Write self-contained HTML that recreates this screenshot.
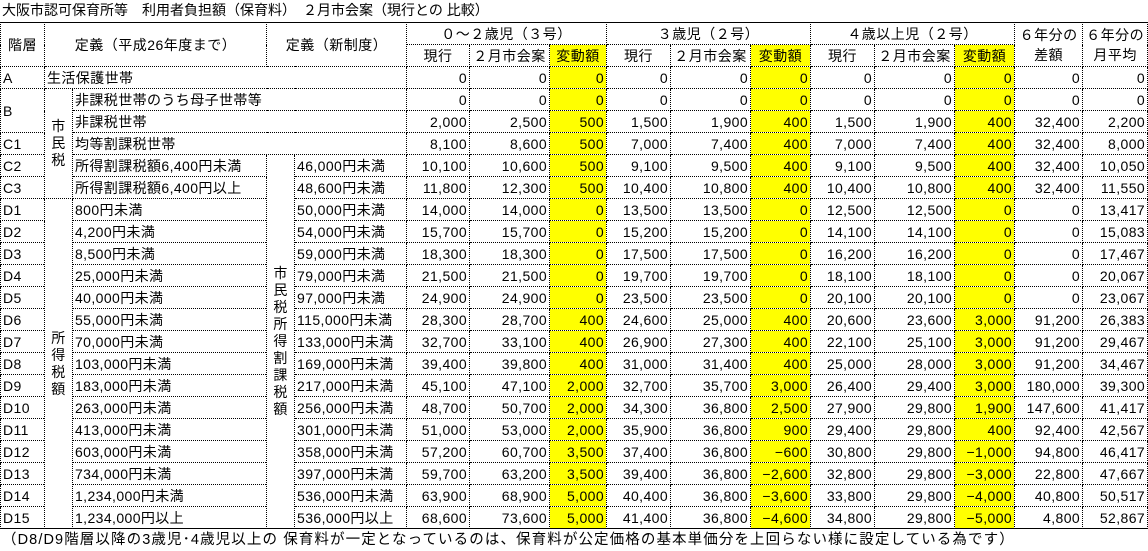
<!DOCTYPE html>
<html><head><meta charset="utf-8"><style>
*{margin:0;padding:0;box-sizing:border-box}
body{width:1148px;height:551px;background:#fff;font-family:"Liberation Sans","Noto Sans CJK JP",sans-serif;font-size:14px;color:#000;overflow:hidden;position:relative}
.title{position:absolute;left:0;top:0;width:1148px;height:23px;border-bottom:1px solid #000;line-height:21px;padding-left:2px;font-size:14px}
table{position:absolute;left:0;top:22px;border-collapse:collapse;table-layout:fixed;width:1147px}
td{border:1px dotted #000;height:22px;padding:0 2px;line-height:20px;white-space:nowrap;overflow:hidden;text-align:right;letter-spacing:0.4px}
tr.h td{text-align:center;font-size:14px;letter-spacing:0.5px}
td.l{text-align:left}
td.v{text-align:center;vertical-align:middle;line-height:17px;white-space:normal}
.y{background:#ffff00}
.foot{position:absolute;left:0;top:528px;width:1147px;height:23px;border-top:1px solid #000;line-height:22px;padding-left:2px;font-size:14.5px;letter-spacing:1.1px;white-space:nowrap}
</style></head><body>
<div class="title">大阪市認可保育所等　利用者負担額（保育料）　２月市会案（現行との 比較）</div>
<table>
<colgroup><col style="width:44px"><col style="width:28px"><col style="width:194px"><col style="width:28px"><col style="width:112px"><col style="width:63px"><col style="width:80px"><col style="width:57px"><col style="width:64px"><col style="width:80px"><col style="width:60px"><col style="width:64px"><col style="width:80px"><col style="width:60px"><col style="width:68px"><col style="width:65px"></colgroup>
<tr class="h"><td rowspan="2">階層</td><td colspan="2" rowspan="2">定義（平成26年度まで）</td><td colspan="2" rowspan="2">定義（新制度）</td><td colspan="3">０～２歳児（３号）</td><td colspan="3">３歳児（２号）</td><td colspan="3">４歳以上児（２号）</td><td rowspan="2" style="line-height:20px;white-space:normal">６年分の<br>差額</td><td rowspan="2" style="line-height:20px;white-space:normal">６年分の<br>月平均</td></tr>
<tr class="h"><td>現行</td><td>２月市会案</td><td class="y">変動額</td><td>現行</td><td>２月市会案</td><td class="y">変動額</td><td>現行</td><td>２月市会案</td><td class="y">変動額</td></tr>
<tr><td class="l">A</td><td class="l" colspan="4">生活保護世帯</td><td>0</td><td>0</td><td class="y">0</td><td>0</td><td>0</td><td class="y">0</td><td>0</td><td>0</td><td class="y">0</td><td>0</td><td>0</td></tr>
<tr><td class="l" rowspan="2">B</td><td class="v" rowspan="5">市<br>民<br>税</td><td class="l" colspan="3">非課税世帯のうち母子世帯等</td><td>0</td><td>0</td><td class="y">0</td><td>0</td><td>0</td><td class="y">0</td><td>0</td><td>0</td><td class="y">0</td><td>0</td><td>0</td></tr>
<tr><td class="l" colspan="3">非課税世帯</td><td>2,000</td><td>2,500</td><td class="y">500</td><td>1,500</td><td>1,900</td><td class="y">400</td><td>1,500</td><td>1,900</td><td class="y">400</td><td>32,400</td><td>2,200</td></tr>
<tr><td class="l">C1</td><td class="l" colspan="3">均等割課税世帯</td><td>8,100</td><td>8,600</td><td class="y">500</td><td>7,000</td><td>7,400</td><td class="y">400</td><td>7,000</td><td>7,400</td><td class="y">400</td><td>32,400</td><td>8,000</td></tr>
<tr><td class="l">C2</td><td class="l">所得割課税額6,400円未満</td><td class="v" rowspan="17">市<br>民<br>税<br>所<br>得<br>割<br>課<br>税<br>額</td><td class="l">46,000円未満</td><td>10,100</td><td>10,600</td><td class="y">500</td><td>9,100</td><td>9,500</td><td class="y">400</td><td>9,100</td><td>9,500</td><td class="y">400</td><td>32,400</td><td>10,050</td></tr>
<tr><td class="l">C3</td><td class="l">所得割課税額6,400円以上</td><td class="l">48,600円未満</td><td>11,800</td><td>12,300</td><td class="y">500</td><td>10,400</td><td>10,800</td><td class="y">400</td><td>10,400</td><td>10,800</td><td class="y">400</td><td>32,400</td><td>11,550</td></tr>
<tr><td class="l">D1</td><td class="v" rowspan="15">所<br>得<br>税<br>額</td><td class="l">800円未満</td><td class="l">50,000円未満</td><td>14,000</td><td>14,000</td><td class="y">0</td><td>13,500</td><td>13,500</td><td class="y">0</td><td>12,500</td><td>12,500</td><td class="y">0</td><td>0</td><td>13,417</td></tr>
<tr><td class="l">D2</td><td class="l">4,200円未満</td><td class="l">54,000円未満</td><td>15,700</td><td>15,700</td><td class="y">0</td><td>15,200</td><td>15,200</td><td class="y">0</td><td>14,100</td><td>14,100</td><td class="y">0</td><td>0</td><td>15,083</td></tr>
<tr><td class="l">D3</td><td class="l">8,500円未満</td><td class="l">59,000円未満</td><td>18,300</td><td>18,300</td><td class="y">0</td><td>17,500</td><td>17,500</td><td class="y">0</td><td>16,200</td><td>16,200</td><td class="y">0</td><td>0</td><td>17,467</td></tr>
<tr><td class="l">D4</td><td class="l">25,000円未満</td><td class="l">79,000円未満</td><td>21,500</td><td>21,500</td><td class="y">0</td><td>19,700</td><td>19,700</td><td class="y">0</td><td>18,100</td><td>18,100</td><td class="y">0</td><td>0</td><td>20,067</td></tr>
<tr><td class="l">D5</td><td class="l">40,000円未満</td><td class="l">97,000円未満</td><td>24,900</td><td>24,900</td><td class="y">0</td><td>23,500</td><td>23,500</td><td class="y">0</td><td>20,100</td><td>20,100</td><td class="y">0</td><td>0</td><td>23,067</td></tr>
<tr><td class="l">D6</td><td class="l">55,000円未満</td><td class="l">115,000円未満</td><td>28,300</td><td>28,700</td><td class="y">400</td><td>24,600</td><td>25,000</td><td class="y">400</td><td>20,600</td><td>23,600</td><td class="y">3,000</td><td>91,200</td><td>26,383</td></tr>
<tr><td class="l">D7</td><td class="l">70,000円未満</td><td class="l">133,000円未満</td><td>32,700</td><td>33,100</td><td class="y">400</td><td>26,900</td><td>27,300</td><td class="y">400</td><td>22,100</td><td>25,100</td><td class="y">3,000</td><td>91,200</td><td>29,467</td></tr>
<tr><td class="l">D8</td><td class="l">103,000円未満</td><td class="l">169,000円未満</td><td>39,400</td><td>39,800</td><td class="y">400</td><td>31,000</td><td>31,400</td><td class="y">400</td><td>25,000</td><td>28,000</td><td class="y">3,000</td><td>91,200</td><td>34,467</td></tr>
<tr><td class="l">D9</td><td class="l">183,000円未満</td><td class="l">217,000円未満</td><td>45,100</td><td>47,100</td><td class="y">2,000</td><td>32,700</td><td>35,700</td><td class="y">3,000</td><td>26,400</td><td>29,400</td><td class="y">3,000</td><td>180,000</td><td>39,300</td></tr>
<tr><td class="l">D10</td><td class="l">263,000円未満</td><td class="l">256,000円未満</td><td>48,700</td><td>50,700</td><td class="y">2,000</td><td>34,300</td><td>36,800</td><td class="y">2,500</td><td>27,900</td><td>29,800</td><td class="y">1,900</td><td>147,600</td><td>41,417</td></tr>
<tr><td class="l">D11</td><td class="l">413,000円未満</td><td class="l">301,000円未満</td><td>51,000</td><td>53,000</td><td class="y">2,000</td><td>35,900</td><td>36,800</td><td class="y">900</td><td>29,400</td><td>29,800</td><td class="y">400</td><td>92,400</td><td>42,567</td></tr>
<tr><td class="l">D12</td><td class="l">603,000円未満</td><td class="l">358,000円未満</td><td>57,200</td><td>60,700</td><td class="y">3,500</td><td>37,400</td><td>36,800</td><td class="y">−600</td><td>30,800</td><td>29,800</td><td class="y">−1,000</td><td>94,800</td><td>46,417</td></tr>
<tr><td class="l">D13</td><td class="l">734,000円未満</td><td class="l">397,000円未満</td><td>59,700</td><td>63,200</td><td class="y">3,500</td><td>39,400</td><td>36,800</td><td class="y">−2,600</td><td>32,800</td><td>29,800</td><td class="y">−3,000</td><td>22,800</td><td>47,667</td></tr>
<tr><td class="l">D14</td><td class="l">1,234,000円未満</td><td class="l">536,000円未満</td><td>63,900</td><td>68,900</td><td class="y">5,000</td><td>40,400</td><td>36,800</td><td class="y">−3,600</td><td>33,800</td><td>29,800</td><td class="y">−4,000</td><td>40,800</td><td>50,517</td></tr>
<tr><td class="l">D15</td><td class="l">1,234,000円以上</td><td class="l">536,000円以上</td><td>68,600</td><td>73,600</td><td class="y">5,000</td><td>41,400</td><td>36,800</td><td class="y">−4,600</td><td>34,800</td><td>29,800</td><td class="y">−5,000</td><td>4,800</td><td>52,867</td></tr>
</table>
<div class="foot">（D8/D9階層以降の3歳児･4歳児以上の 保育料が一定となっているのは、保育料が公定価格の基本単価分を上回らない様に設定している為です）</div>
</body></html>
